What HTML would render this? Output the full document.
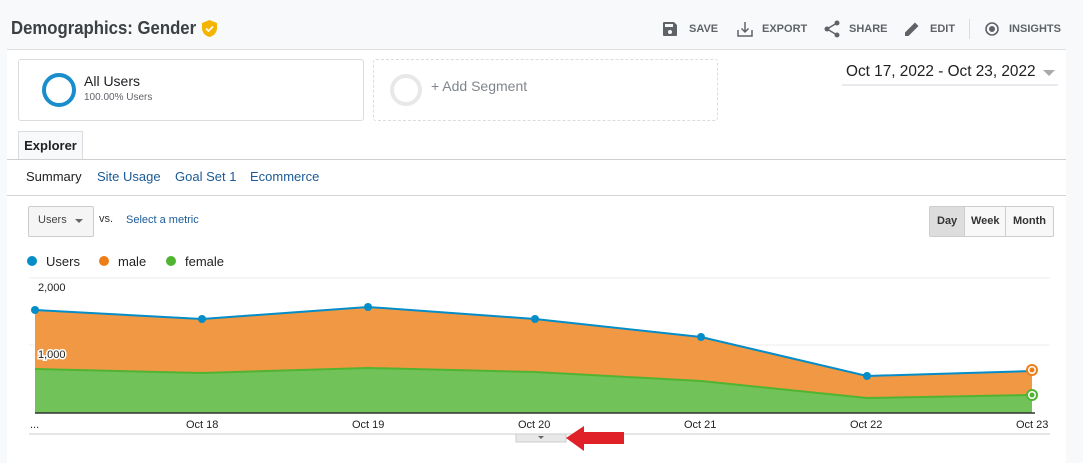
<!DOCTYPE html>
<html><head><style>
body{margin:0;width:1083px;height:462px;background:#f8f9fa;font-family:"Liberation Sans",Arial,sans-serif;position:relative;overflow:hidden}
.a{position:absolute}
.title{left:11px;top:18px;font-size:18px;font-weight:bold;color:#3c4043;transform:scaleX(0.93);transform-origin:left}
.panel{left:7px;top:49px;width:1059px;height:413px;background:#fff;border-top:1px solid #e0e0e0}
.tb{top:23px;font-size:11px;font-weight:bold;color:#5f6368}
.link{color:#1a5a96;font-size:13px}
</style></head><body>
<div class="a title">Demographics: Gender</div>
<svg class="a" style="left:202px;top:20px" width="15" height="17" viewBox="0 0 15 17"><path d="M7.5 0L0 3v5c0 4.5 3.2 8 7.5 9 4.3-1 7.5-4.5 7.5-9V3z" fill="#f4b400"/><path d="M4 8.5l2.5 2.5 4.5-4.5" stroke="#fff" stroke-width="1.6" fill="none"/></svg>
<svg class="a" style="left:663px;top:22px" width="14" height="14"><path d="M0 1a1 1 0 011-1h10l3 3v10a1 1 0 01-1 1H1a1 1 0 01-1-1z" fill="#5f6368"/><rect x="2" y="2" width="8" height="3" fill="#f8f9fa"/><circle cx="7" cy="10" r="2" fill="#f8f9fa"/></svg>
<div class="a tb" style="left:689px">SAVE</div>
<svg class="a" style="left:737px;top:21px" width="16" height="16" fill="none" stroke="#5f6368" stroke-width="1.5"><path d="M1 9v6h14V9M8 1v10M4.5 7.5L8 11l3.5-3.5"/></svg>
<div class="a tb" style="left:762px">EXPORT</div>
<svg class="a" style="left:824px;top:20px" width="16" height="18"><path d="M13 3L3 9l10 6" stroke="#5f6368" stroke-width="1.5" fill="none"/><circle cx="13" cy="3" r="2.5" fill="#5f6368"/><circle cx="3" cy="9" r="2.5" fill="#5f6368"/><circle cx="13" cy="15" r="2.5" fill="#5f6368"/></svg>
<div class="a tb" style="left:849px">SHARE</div>
<svg class="a" style="left:905px;top:21px" width="15" height="15"><path d="M0 15v-3.5L10 1.5l3.5 3.5-10 10z M11 0.5l3.5 3.5" fill="#5f6368"/></svg>
<div class="a tb" style="left:930px">EDIT</div>
<div class="a" style="left:969px;top:19px;width:1px;height:20px;background:#dadce0"></div>
<svg class="a" style="left:984px;top:21px" width="16" height="16" fill="none" stroke="#5f6368" stroke-width="1.6"><circle cx="8" cy="8" r="6"/><circle cx="8" cy="8" r="2.2" fill="#5f6368"/></svg>
<div class="a tb" style="left:1009px">INSIGHTS</div>
<div class="a panel"></div>
<div class="a" style="left:18px;top:59px;width:344px;height:60px;border:1px solid #dadce0;border-radius:3px;background:#fff"></div>
<div class="a" style="left:42px;top:73px;width:26px;height:26px;border:4px solid #1a8dcc;border-radius:50%"></div>
<div class="a" style="left:84px;top:73px;font-size:14px;color:#202124">All Users</div>
<div class="a" style="left:84px;top:92px;font-size:10px;color:#5f6368">100.00% Users</div>
<div class="a" style="left:373px;top:59px;width:343px;height:60px;border:1px dashed #dadce0;border-radius:3px"></div>
<div class="a" style="left:390px;top:74px;width:24px;height:24px;border:4px solid #e8e8e8;border-radius:50%"></div>
<div class="a" style="left:431px;top:78px;font-size:14px;color:#80868b">+ Add Segment</div>
<div class="a" style="left:846px;top:63px;font-size:16px;color:#202124;transform:scaleX(0.96);transform-origin:left">Oct 17, 2022 - Oct 23, 2022</div>
<div class="a" style="left:1043px;top:70px;border:6px solid transparent;border-top:6px solid #aaa"></div>
<div class="a" style="left:842px;top:84px;width:216px;height:2px;background:#e8eaed"></div>
<div class="a" style="left:18px;top:131px;width:63px;height:28px;border:1px solid #dadce0;border-bottom:none;background:#f8f9fa;font-size:13px;font-weight:bold;color:#202124;text-align:center;line-height:28px">Explorer</div>
<div class="a" style="left:7px;top:159px;width:1059px;height:1px;background:#cfcfcf"></div>
<div class="a" style="left:26px;top:169px;font-size:13px;color:#202124">Summary</div>
<div class="a link" style="left:97px;top:169px">Site Usage</div>
<div class="a link" style="left:175px;top:169px">Goal Set 1</div>
<div class="a link" style="left:250px;top:169px">Ecommerce</div>
<div class="a" style="left:7px;top:195px;width:1059px;height:1px;background:#d5d5d5"></div>
<div class="a" style="left:28px;top:206px;width:64px;height:29px;border:1px solid #ccc;border-radius:2px;background:#f5f5f5"></div>
<div class="a" style="left:38px;top:214px;font-size:11px;color:#444">Users</div>
<div class="a" style="left:75px;top:219px;border:4px solid transparent;border-top:4px solid #666"></div>
<div class="a" style="left:99px;top:213px;font-size:11px;color:#333">vs.</div>
<div class="a" style="left:126px;top:214px;font-size:11px;color:#1a5a96">Select a metric</div>
<div class="a" style="left:929px;top:206px;width:123px;height:29px;border:1px solid #ccc;border-radius:2px;background:#f8f8f8"></div>
<div class="a" style="left:930px;top:207px;width:34px;height:29px;background:#ddd"></div>
<div class="a" style="left:964px;top:207px;width:1px;height:29px;background:#ccc"></div>
<div class="a" style="left:1005px;top:207px;width:1px;height:29px;background:#ccc"></div>
<div class="a" style="left:937px;top:215px;font-size:11px;font-weight:bold;color:#333">Day</div>
<div class="a" style="left:971px;top:215px;font-size:11px;font-weight:bold;color:#333">Week</div>
<div class="a" style="left:1013px;top:215px;font-size:11px;font-weight:bold;color:#333">Month</div>
<svg class="a" style="left:0;top:245px" width="1083" height="217">
<g font-family="Liberation Sans,Arial" font-size="13" fill="#222">
<circle cx="32" cy="16" r="5" fill="#058dc7"/><text x="46" y="21">Users</text>
<circle cx="104" cy="16" r="5" fill="#ed7e17"/><text x="118" y="21">male</text>
<circle cx="171" cy="16" r="5" fill="#50b432"/><text x="185" y="21">female</text></g>
<line x1="29" y1="33" x2="1050" y2="33" stroke="#eee"/>
<line x1="29" y1="100" x2="1050" y2="100" stroke="#eee"/>
<path d="M35 65L202 74L368 62L535 74L701 92L867 131L1032 126V168H35z" fill="#f09844"/>
<path d="M35 124L202 128L368 123L535 127L701 136L867 153L1032 150V168H35z" fill="#72c25a"/>
<path d="M35 124L202 128L368 123L535 127L701 136L867 153L1032 150" fill="none" stroke="#50b432" stroke-width="2"/>
<path d="M35 65L202 74L368 62L535 74L701 92L867 131L1032 126" fill="none" stroke="#058dc7" stroke-width="2"/>
<g fill="#058dc7"><circle cx="35" cy="65" r="4"/><circle cx="202" cy="74" r="4"/><circle cx="368" cy="62" r="4"/><circle cx="535" cy="74" r="4"/><circle cx="701" cy="92" r="4"/><circle cx="867" cy="131" r="4"/></g>
<circle cx="1032" cy="125" r="5" fill="#fff" stroke="#ed7e17" stroke-width="2"/><circle cx="1032" cy="125" r="2.5" fill="#ed7e17"/>
<circle cx="1032" cy="150" r="5" fill="#fff" stroke="#50b432" stroke-width="2"/><circle cx="1032" cy="150" r="2.5" fill="#50b432"/>
<line x1="35" y1="168" x2="1035" y2="168" stroke="#333" stroke-width="1.5"/>
<g font-family="Liberation Sans,Arial" font-size="11" fill="#222"><text x="38" y="46">2,000</text><text x="38" y="113" stroke="#fff" stroke-width="3" paint-order="stroke">1,000</text>
<text x="30" y="183">...</text><text x="186" y="183">Oct 18</text><text x="352" y="183">Oct 19</text><text x="518" y="183">Oct 20</text><text x="684" y="183">Oct 21</text><text x="850" y="183">Oct 22</text><text x="1016" y="183">Oct 23</text></g>
<line x1="29" y1="189" x2="1050" y2="189" stroke="#ccc"/>
<rect x="516" y="189" width="50" height="8" fill="#e8e8e8" stroke="#ccc"/>
<path d="M538 191h6l-3 3z" fill="#666"/>
<path d="M566 193L584 181V187H624V199H584V206z" fill="#e02128"/>
</svg>
</body></html>
